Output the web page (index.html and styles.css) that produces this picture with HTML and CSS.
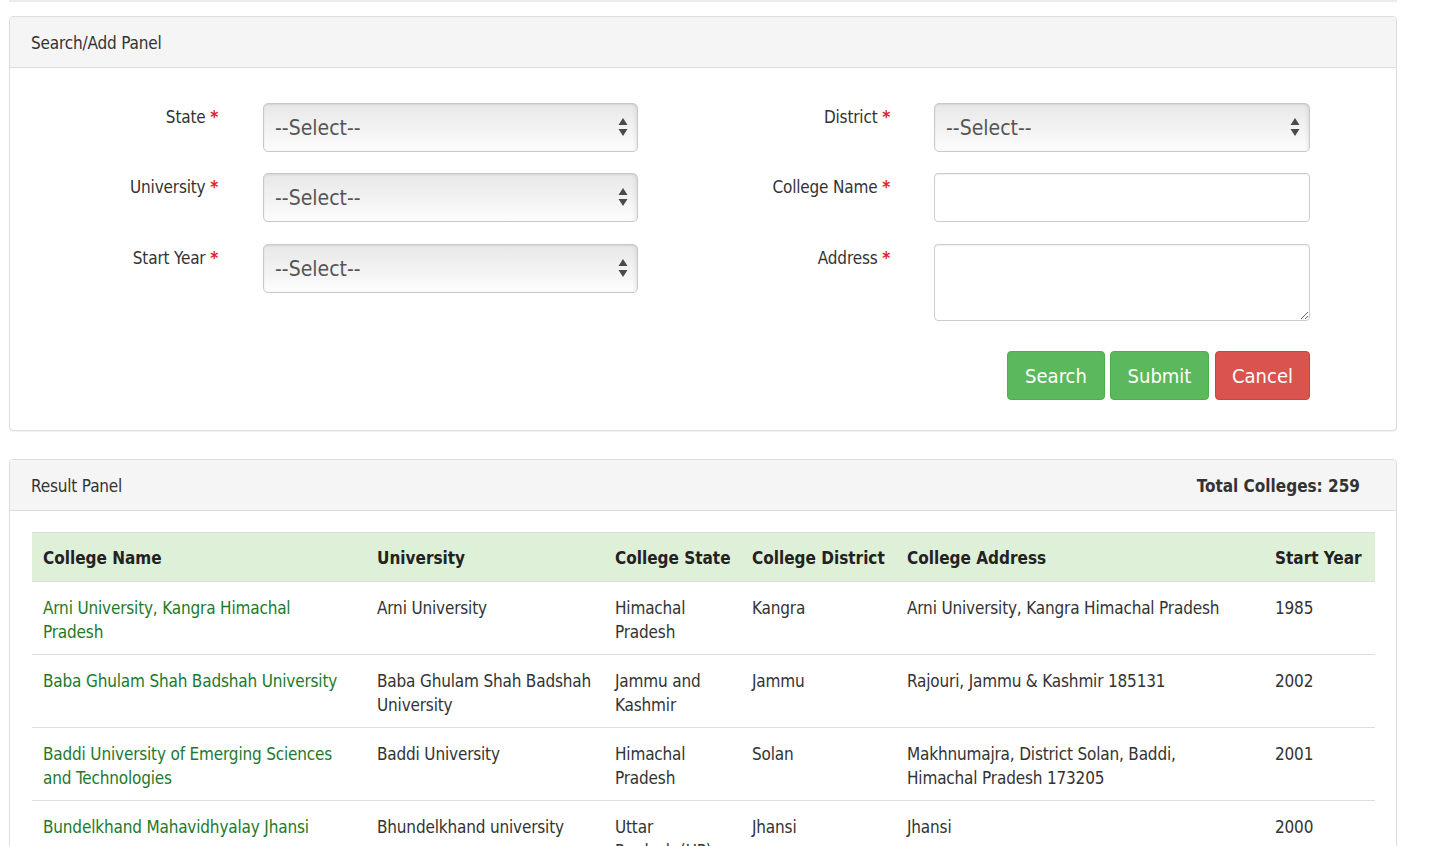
FILE: index.html
```html
<!DOCTYPE html>
<html lang="en">
<head>
<meta charset="utf-8">
<title>College Search</title>
<link rel="stylesheet" href="styles.css">
</head>
<body>
<div class="page">
  <div class="topline"></div>

  <section class="panel">
    <div class="panel-heading">Search/Add Panel</div>
    <div class="panel-body">
      <form class="form-grid">
        <label class="lbl">State <span class="req">*</span></label>
        <div class="select-wrap">
          <select class="sel"><option>--Select--</option></select>
          <svg class="arrows" width="10" height="20" viewBox="0 0 10 20"><path d="M5 1 L9.5 8 H0.5 Z M5 19 L9.5 12 H0.5 Z" fill="#4a4a4a"/></svg>
        </div>
        <label class="lbl">District <span class="req">*</span></label>
        <div class="select-wrap">
          <select class="sel"><option>--Select--</option></select>
          <svg class="arrows" width="10" height="20" viewBox="0 0 10 20"><path d="M5 1 L9.5 8 H0.5 Z M5 19 L9.5 12 H0.5 Z" fill="#4a4a4a"/></svg>
        </div>

        <label class="lbl">University <span class="req">*</span></label>
        <div class="select-wrap">
          <select class="sel"><option>--Select--</option></select>
          <svg class="arrows" width="10" height="20" viewBox="0 0 10 20"><path d="M5 1 L9.5 8 H0.5 Z M5 19 L9.5 12 H0.5 Z" fill="#4a4a4a"/></svg>
        </div>
        <label class="lbl">College Name <span class="req">*</span></label>
        <input class="txt" type="text">

        <label class="lbl row3">Start Year <span class="req">*</span></label>
        <div class="select-wrap row3">
          <select class="sel"><option>--Select--</option></select>
          <svg class="arrows" width="10" height="20" viewBox="0 0 10 20"><path d="M5 1 L9.5 8 H0.5 Z M5 19 L9.5 12 H0.5 Z" fill="#4a4a4a"/></svg>
        </div>
        <label class="lbl row3">Address <span class="req">*</span></label>
        <textarea class="txt area row3"></textarea>

        <div class="actions">
          <button type="button" class="btn btn-green btn-search">Search</button>
          <button type="button" class="btn btn-green btn-submit">Submit</button>
          <button type="button" class="btn btn-red btn-cancel">Cancel</button>
        </div>
      </form>
    </div>
  </section>

  <section class="panel result">
    <div class="panel-heading heading-flex">
      <span>Result Panel</span>
      <span class="total">Total Colleges: 259</span>
    </div>
    <div class="panel-body table-body">
      <table class="tbl">
        <colgroup>
          <col class="c1"><col class="c2"><col class="c3"><col class="c4"><col class="c5"><col class="c6">
        </colgroup>
        <thead>
          <tr>
            <th>College Name</th><th>University</th><th>College State</th><th>College District</th><th>College Address</th><th>Start Year</th>
          </tr>
        </thead>
        <tbody>
          <tr>
            <td><a href="#">Arni University, Kangra Himachal Pradesh</a></td>
            <td>Arni University</td><td class="state">Himachal Pradesh</td><td>Kangra</td>
            <td class="addr">Arni University, Kangra Himachal Pradesh</td><td>1985</td>
          </tr>
          <tr>
            <td><a href="#">Baba Ghulam Shah Badshah University</a></td>
            <td>Baba Ghulam Shah Badshah University</td><td class="state">Jammu and Kashmir</td><td>Jammu</td>
            <td class="addr">Rajouri, Jammu &amp; Kashmir 185131</td><td>2002</td>
          </tr>
          <tr>
            <td><a href="#">Baddi University of Emerging Sciences and Technologies</a></td>
            <td>Baddi University</td><td class="state">Himachal Pradesh</td><td>Solan</td>
            <td class="addr">Makhnumajra, District Solan, Baddi, Himachal Pradesh 173205</td><td>2001</td>
          </tr>
          <tr>
            <td><a href="#">Bundelkhand Mahavidhyalay Jhansi</a></td>
            <td>Bhundelkhand university</td><td class="state">Uttar Pradesh (UP)</td><td>Jhansi</td>
            <td class="addr">Jhansi</td><td>2000</td>
          </tr>
        </tbody>
      </table>
    </div>
  </section>
</div>
</body>
</html>
```

FILE: styles.css
```css
* { box-sizing: border-box; }

html, body {
  margin: 0;
  padding: 0;
  background: #fff;
}

body {
  font-family: "DejaVu Sans Condensed", "DejaVu Sans", Verdana, sans-serif;
  font-size: 17px;
  line-height: 24px;
  letter-spacing: -0.17px;
  color: #333;
}

.page {
  width: 1397px;
  padding-left: 9px;
  padding-bottom: 40px;
}

.topline {
  height: 2px;
  background: #ececec;
  margin-bottom: 14px;
}

.panel {
  border: 1px solid #ddd;
  border-radius: 4px;
  background: #fff;
  box-shadow: 0 1px 1px rgba(0,0,0,0.05);
}

.panel.result {
  margin-top: 28px;
}

.panel-heading {
  height: 51px;
  background: #f5f5f5;
  border-bottom: 1px solid #ddd;
  border-radius: 3px 3px 0 0;
  padding: 14px 21px 0;
  color: #333;
}

.heading-flex {
  display: flex;
  justify-content: space-between;
}

.total {
  font-weight: bold;
  color: #333;
  margin-right: 15px;
  letter-spacing: 0;
}

.panel-body {
  padding: 35px 0 30px 8px;
}

.form-grid {
  display: grid;
  grid-template-columns: 245px 375px 296px 376px;
  grid-auto-rows: auto;
  row-gap: 21px;
  align-items: start;
}

.form-grid .row3 { margin-top: 1px; }

.lbl {
  text-align: right;
  padding-right: 45px;
  padding-top: 2px;
  color: #333;
}

.form-grid .lbl:nth-of-type(even) { padding-right: 44px; }

.req {
  color: #e0231b;
  font-weight: bold;
}

.select-wrap {
  position: relative;
  height: 49px;
}

.sel {
  -webkit-appearance: none;
  appearance: none;
  width: 100%;
  height: 49px;
  border: 1px solid #c9c9c9;
  border-radius: 5px;
  padding: 0 30px 0 11px;
  font-family: inherit;
  font-size: 21px;
  letter-spacing: 0;
  color: #555;
  background: linear-gradient(#e8e8e8, #f3f3f3 55%, #fdfdfd);
  box-shadow: inset 0 1px 2px rgba(0,0,0,0.08), inset -3px 0 3px rgba(0,0,0,0.04);
  outline: none;
}

.arrows {
  position: absolute;
  right: 10px;
  top: 14px;
  pointer-events: none;
}

.txt {
  display: block;
  width: 100%;
  height: 49px;
  border: 1px solid #ccc;
  border-radius: 4px;
  background: #fff;
  font-family: inherit;
  font-size: 17px;
  box-shadow: inset 0 1px 1px rgba(0,0,0,0.06);
  outline: none;
}

.area {
  height: 77px;
  resize: vertical;
}

.actions {
  grid-column: 4;
  display: flex;
  justify-content: flex-end;
  margin-top: 9px;
}

.btn {
  height: 49px;
  border: 1px solid transparent;
  border-radius: 4px;
  color: #fff;
  font-family: inherit;
  font-size: 20px;
  letter-spacing: 0;
  padding: 0;
  cursor: pointer;
}

.btn-green { background: #5cb85c; border-color: #4cae4c; }
.btn-red { background: #d9534f; border-color: #d43f3a; }
.btn-search { width: 98px; }
.btn-submit { width: 99px; margin-left: 5px; }
.btn-cancel { width: 95px; margin-left: 6px; }

.table-body {
  padding: 21px 21px 0 22px;
}

.tbl {
  width: 100%;
  border-collapse: collapse;
  table-layout: fixed;
}

.c1 { width: 334px; }
.c2 { width: 238px; }
.c3 { width: 137px; }
.c4 { width: 155px; }
.c5 { width: 368px; }
.c6 { width: 111px; }

.tbl th {
  background: #dff0d8;
  text-align: left;
  font-weight: bold;
  letter-spacing: 0;
  color: #222;
  padding: 13px 11px 11px;
  height: 49px;
  border-top: 1px solid #ddd;
  border-bottom: 1px solid #ddd;
  white-space: nowrap;
}

.tbl td {
  padding: 14px 11px 10px;
  vertical-align: top;
  border-top: 1px solid #ddd;
  color: #333;
}

.tbl td.state { padding-right: 26px; }
.tbl td.addr { padding-right: 24px; }

.tbl tbody tr:first-child td { border-top: 0; }

.tbl a {
  color: #1d7a2a;
  text-decoration: none;
}
```
